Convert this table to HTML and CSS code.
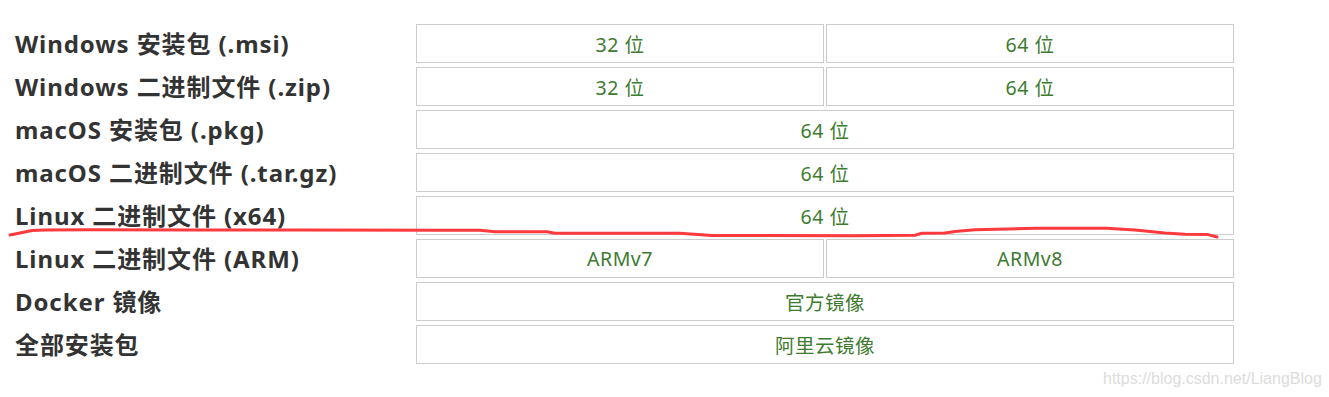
FILE: index.html
```html
<!DOCTYPE html>
<html lang="zh-CN">
<head>
<meta charset="utf-8">
<title>下载</title>
<link rel="stylesheet" href="styles.css">
</head>
<body>
<div class="page">
  <div class="grid">
    <div class="label">Windows 安装包 (.msi)</div>
    <a class="cell">32 位</a>
    <a class="cell">64 位</a>

    <div class="label">Windows 二进制文件 (.zip)</div>
    <a class="cell">32 位</a>
    <a class="cell">64 位</a>

    <div class="label">macOS 安装包 (.pkg)</div>
    <a class="cell wide">64 位</a>

    <div class="label">macOS 二进制文件 (.tar.gz)</div>
    <a class="cell wide">64 位</a>

    <div class="label">Linux 二进制文件 (x64)</div>
    <a class="cell wide">64 位</a>

    <div class="label">Linux 二进制文件 (ARM)</div>
    <a class="cell">ARMv7</a>
    <a class="cell">ARMv8</a>

    <div class="label">Docker 镜像</div>
    <a class="cell wide">官方镜像</a>

    <div class="label">全部安装包</div>
    <a class="cell wide">阿里云镜像</a>
  </div>

  <svg class="scribble" width="1329" height="397" viewBox="0 0 1329 397">
    <polyline points="10,235 20,233 32,230.5 45,230 90,229.8 200,230 300,230 440,230.2 480,230.3 495,231.7 547,231.7 555,233.3 680,233.3 712,235.5 856,235.8 915,235.2 922,233.2 945,233 955,231.5 975,229.8 1035,228.3 1107,228.3 1135,230 1165,233 1185,234.3 1208,234.6 1217,237" fill="none" stroke="#ff3a3f" stroke-width="3" stroke-linecap="round" stroke-linejoin="round"/>
  </svg>

  <div class="watermark">https://blog.csdn.net/LiangBlog</div>
</div>
</body>
</html>
```

FILE: styles.css
```css
html, body {
  margin: 0;
  padding: 0;
  background: #ffffff;
}

.page {
  position: relative;
  width: 1329px;
  height: 397px;
  overflow: hidden;
}

.grid {
  display: grid;
  grid-template-columns: 399px 408px 408px;
  grid-auto-rows: 39px;
  column-gap: 2px;
  row-gap: 4px;
  padding: 24px 0 0 15px;
}

.label {
  display: flex;
  align-items: center;
  padding-bottom: 3px;
  font-family: "Noto Sans", "Noto Sans CJK SC", sans-serif;
  font-weight: 700;
  font-size: 24px;
  letter-spacing: 0.9px;
  color: #333333;
  white-space: nowrap;
}

.cell {
  display: flex;
  align-items: center;
  justify-content: center;
  box-sizing: border-box;
  border: 1px solid #cccccc;
  font-family: "Noto Sans", "Noto Sans CJK SC", sans-serif;
  font-size: 19.5px;
  letter-spacing: 0.5px;
  color: #3d7b2f;
  text-decoration: none;
}

.cell.wide {
  grid-column: span 2;
}

.scribble {
  position: absolute;
  left: 0;
  top: 0;
  pointer-events: none;
}

.watermark {
  position: absolute;
  left: 1103px;
  top: 370px;
  font-family: "Liberation Sans", Arial, sans-serif;
  font-size: 16px;
  color: #dcdcdc;
  white-space: nowrap;
}
```
